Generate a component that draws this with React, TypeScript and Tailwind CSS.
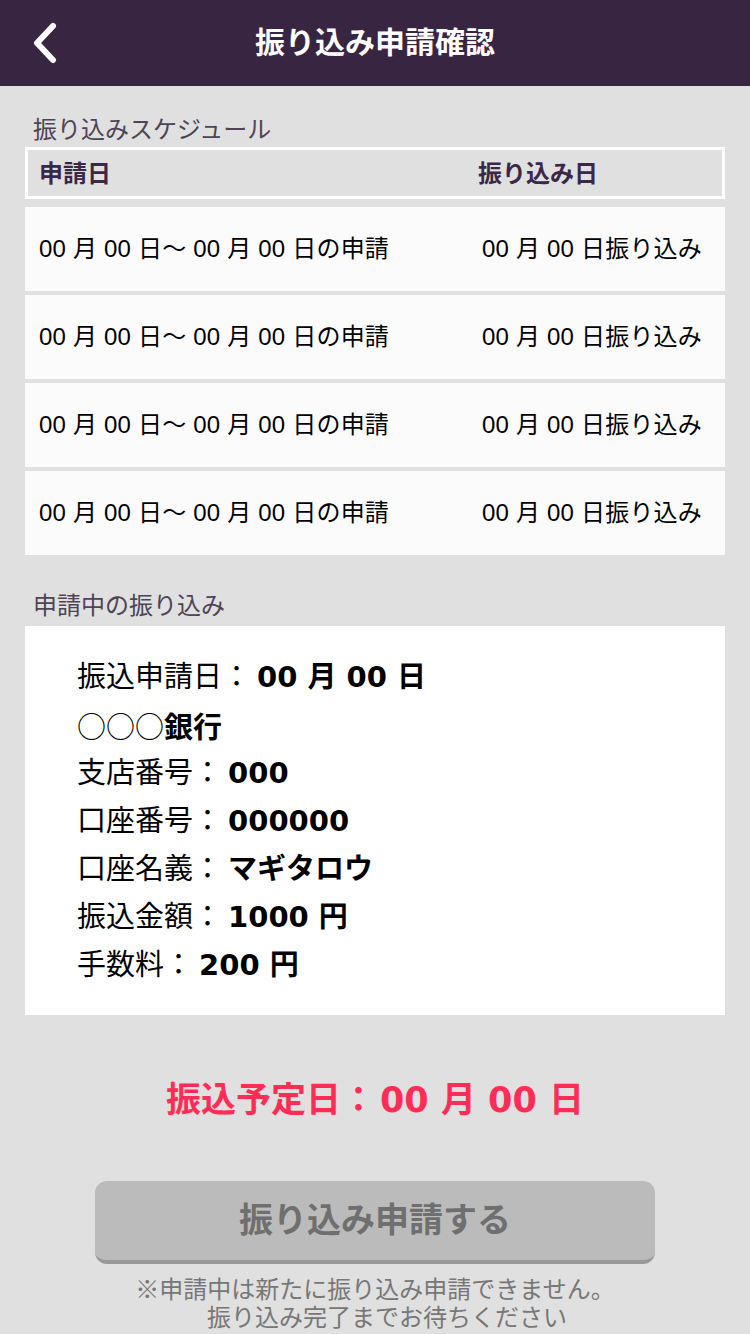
import React from "react";

// Latin falls to Liberation/DejaVu first, CJK to Noto Sans CJK JP
const SANS = "font-['Liberation_Sans','Noto_Sans_CJK_JP',sans-serif]";
const BOLD_NUM = "font-['DejaVu_Sans','Noto_Sans_CJK_JP',sans-serif]";
const CJK = "font-['Noto_Sans_CJK_JP',sans-serif]";

const rows = [0, 1, 2, 3];

const details: { label: string; value: string; colon: boolean }[] = [
  { label: "振込申請日", value: "00 月 00 日", colon: true },
  { label: "○○○", value: "銀行", colon: false },
  { label: "支店番号", value: "000", colon: true },
  { label: "口座番号", value: "000000", colon: true },
  { label: "口座名義", value: "マギタロウ", colon: true },
  { label: "振込金額", value: "1000 円", colon: true },
  { label: "手数料", value: "200 円", colon: true },
];

function BackIcon() {
  return (
    <svg width="28" height="44" viewBox="0 0 28 44" fill="none">
      <path d="M20 5 L4 22 L20 39" stroke="white" strokeWidth="6" strokeLinecap="round" strokeLinejoin="round" />
    </svg>
  );
}

export default function App() {
  return (
    <div className={`w-[750px] min-h-[1334px] bg-[#e0e0e0] ${SANS}`}>
      {/* header */}
      <header className="relative h-[86px] bg-[#382542] flex items-center justify-center">
        <button className="absolute left-[33px] top-[21px]">
          <BackIcon />
        </button>
        <h1 className="text-[30px] font-bold text-white leading-none">振り込み申請確認</h1>
      </header>

      <main className="px-[25px]">
        <p className="pt-[28px] mb-[2px] pl-[8px] text-[24px] leading-[31px] text-[#4d4455]">振り込みスケジュール</p>

        <div className="h-[52px] border-[3px] border-white bg-[#e0e0e0] flex items-center pt-[2px] text-[24px] font-bold text-[#3b2848]">
          <span className="w-[450px] pl-[11px]">申請日</span>
          <span>振り込み日</span>
        </div>

        <div className="mt-[8px] flex flex-col gap-[4px]">
          {rows.map((i) => (
            <div key={i} className="h-[84px] bg-[#fbfbfb] flex items-center text-[24px] text-black">
              <span className="w-[457px] pl-[14px] tracking-[0.2px]">00 月 00 日〜 00 月 00 日の申請</span>
              <span className="tracking-[0.2px]">00 月 00 日振り込み</span>
            </div>
          ))}
        </div>

        <p className="mt-[35px] pl-[8px] text-[24px] leading-[31px] text-[#4d4455]">申請中の振り込み</p>

        <div className="mt-[5px] bg-white pt-[27px] pb-[26px] pl-[52px]">
          {details.map((d) => (
            <p key={d.label} className="h-[48px] text-[29px] leading-[48px] text-black">
              <span className={d.colon ? "" : CJK}>{d.label}</span>
              {d.colon && "："}
              <span className={`font-bold ${d.colon ? `ml-[6px] ${BOLD_NUM}` : ""}`}>{d.value}</span>
            </p>
          ))}
        </div>

        <p className="mt-[60px] text-center text-[35px] leading-[50px] font-bold text-[#ff2d55]">
          振込予定日：<span className={`ml-[4px] ${BOLD_NUM}`}>00 月 00 日</span>
        </p>

        <div className="mt-[56px] flex justify-center">
          <button className="w-[560px] h-[83px] rounded-[12px] bg-[#bbbbbb] border-b-[4px] border-[#999999] text-[34px] font-bold text-[#6f6f6f]">
            振り込み申請する
          </button>
        </div>

        <div className="mt-[12px] text-center text-[24px] leading-[28px] text-[#777777]">
          <p>※申請中は新たに振り込み申請できません。</p>
          <p>　振り込み完了までお待ちください</p>
        </div>
      </main>
    </div>
  );
}
